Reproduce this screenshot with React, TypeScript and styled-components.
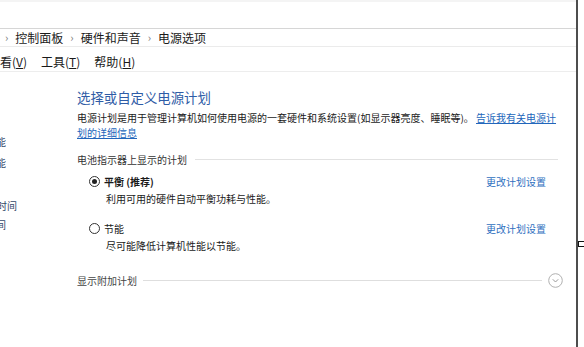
import styled, { createGlobalStyle } from 'styled-components';

const GlobalStyle = createGlobalStyle`
  html, body {
    margin: 0;
    padding: 0;
    background: #fff;
  }
  body {
    font-family: "Noto Sans CJK SC", "Noto Sans", sans-serif;
    color: #1a1a1a;
  }
`;

const Screen = styled.div`
  position: relative;
  display: flex;
  width: 584px;
  height: 347px;
  overflow: hidden;
  background: #fff;
`;

const Window = styled.div`
  width: 576px;
  display: flex;
  flex-direction: column;
  overflow: hidden;
`;

const Edge = styled.div`
  width: 2px;
  background: #4d4d4d;
`;

const Outside = styled.div`
  position: relative;
  flex: 1;
`;

// stray bit of something off-window
const Marker = styled.div`
  position: absolute;
  left: 0;
  top: 241px;
  width: 6px;
  height: 4px;
  border: 1px solid #111;
  border-right: none;
`;

const TitleStrip = styled.div`
  box-sizing: border-box;
  height: 29px;
  border-top: 2px solid #f4f4f4;
  border-bottom: 1px solid #d6d6d6;
`;

const AddressBar = styled.div`
  box-sizing: border-box;
  height: 18px;
  display: flex;
  align-items: center;
  gap: 5px;
  padding-left: 3px;
  border-bottom: 1px solid #ebebeb;
  font-size: 12px;
  line-height: 17px;
  white-space: nowrap;
`;

const Crumb = styled.span`
  color: #1a1a1a;
`;

const Sep = styled.span`
  color: #777;
  font-size: 11px;
  padding: 0 2px;
`;

const MenuBar = styled.div`
  box-sizing: border-box;
  height: 25px;
  display: flex;
  align-items: center;
  gap: 14px;
  padding-top: 5px;
  border-bottom: 1px solid #ededed;
  font-size: 12px;
  line-height: 18px;
  white-space: nowrap;
`;

const MenuItem = styled.span<{ $cut?: number }>`
  color: #1a1a1a;
  margin-left: ${(p) => (p.$cut ? -p.$cut : 0)}px;
  u {
    text-decoration: underline;
    text-underline-offset: 1px;
  }
`;

const Body = styled.div`
  flex: 1;
  display: flex;
`;

const Sidebar = styled.div`
  width: 77px;
  display: flex;
  flex-direction: column;
  padding-top: 62px;
`;

const SideLink = styled.div<{ $show: number; $top?: number }>`
  width: ${(p) => p.$show}px;
  margin-top: ${(p) => p.$top || 0}px;
  display: flex;
  justify-content: flex-end;
  overflow: hidden;
  white-space: nowrap;
  font-size: 10px;
  line-height: 15px;
  color: #34496b;
`;

const Main = styled.div`
  width: 486px;
  display: flex;
  flex-direction: column;
  padding-top: 16px;
`;

const Title = styled.h1`
  margin: 0;
  font-size: 13.4px;
  line-height: 18px;
  font-weight: 400;
  color: #2f5ca6;
`;

const Intro = styled.p`
  margin: 4px 0 0;
  max-width: 484px;
  font-size: 10px;
  line-height: 15px;
  color: #1a1a1a;
`;

const Link = styled.a`
  color: #2266bb;
  text-decoration: underline;
  text-underline-offset: 1px;
  cursor: pointer;
`;

const GroupHeader = styled.div`
  margin-top: 12px;
  display: flex;
  align-items: center;
  gap: 8px;
  padding-right: 5px;
  font-size: 10px;
  line-height: 15px;
  color: #333;
  &::after {
    content: '';
    flex: 1;
    height: 1px;
    background: #e2e2e2;
  }
`;

const Plan = styled.div<{ $top: number }>`
  margin-top: ${(p) => p.$top}px;
  display: flex;
  flex-direction: column;
  gap: 2px;
`;

const PlanRow = styled.label`
  display: flex;
  align-items: center;
  padding-left: 12px;
  padding-right: 17px;
  font-size: 10px;
  line-height: 15px;
`;

const Radio = styled.span<{ $checked?: boolean }>`
  box-sizing: border-box;
  width: 11px;
  height: 11px;
  border-radius: 50%;
  border: 1px solid #333;
  display: flex;
  align-items: center;
  justify-content: center;
  &::after {
    content: '';
    width: 5px;
    height: 5px;
    border-radius: 50%;
    background: ${(p) => (p.$checked ? '#222' : 'transparent')};
  }
`;

const PlanName = styled.span<{ $bold?: boolean }>`
  margin-left: 4px;
  flex: 1;
  font-weight: ${(p) => (p.$bold ? 700 : 400)};
  color: #1a1a1a;
`;

const ChangeLink = styled.a`
  color: #2f6fc0;
  text-decoration: none;
  cursor: pointer;
`;

const PlanDesc = styled.div`
  padding-left: 29px;
  font-size: 10px;
  line-height: 15px;
  color: #1a1a1a;
`;

const More = styled.div`
  margin-top: 20px;
  display: flex;
  align-items: center;
  gap: 6px;
  font-size: 10px;
  line-height: 15px;
  color: #444;
`;

const MoreLine = styled.div`
  flex: 1;
  height: 1px;
  background: #dedede;
`;

const ExpandButton = styled.button`
  width: 15px;
  height: 15px;
  padding: 0;
  border: none;
  background: none;
  display: flex;
  align-items: center;
  justify-content: center;
  cursor: pointer;
`;

const ExpandIcon = () => (
  <svg width="15" height="15" viewBox="0 0 15 15">
    <circle cx="7.5" cy="7.5" r="6.8" fill="none" stroke="#b0b0b0" strokeWidth="1" />
    <path d="M4.8 6.3 L7.5 9 L10.2 6.3" fill="none" stroke="#9a9a9a" strokeWidth="1" />
  </svg>
);

export default function App() {
  return (
    <>
      <GlobalStyle />
      <Screen>
        <Window>
          <TitleStrip />
          <AddressBar>
            <Sep>›</Sep>
            <Crumb>控制面板</Crumb>
            <Sep>›</Sep>
            <Crumb>硬件和声音</Crumb>
            <Sep>›</Sep>
            <Crumb>电源选项</Crumb>
          </AddressBar>
          <MenuBar>
            <MenuItem $cut={12}>
              查看(<u>V</u>)
            </MenuItem>
            <MenuItem>
              工具(<u>T</u>)
            </MenuItem>
            <MenuItem>
              帮助(<u>H</u>)
            </MenuItem>
          </MenuBar>
          <Body>
            <Sidebar>
              <SideLink $show={6}>选择电源按钮的功能</SideLink>
              <SideLink $show={6} $top={6}>
                选择关闭盖子的功能
              </SideLink>
              <SideLink $show={17} $top={28}>
                选择关闭显示器的时间
              </SideLink>
              <SideLink $show={6} $top={4}>
                更改计算机睡眠时间
              </SideLink>
            </Sidebar>
            <Main>
              <Title>选择或自定义电源计划</Title>
              <Intro>
                电源计划是用于管理计算机如何使用电源的一套硬件和系统设置(如显示器亮度、睡眠等)。{' '}
                <Link>告诉我有关电源计划的详细信息</Link>
              </Intro>
              <GroupHeader>电池指示器上显示的计划</GroupHeader>
              <Plan $top={7}>
                <PlanRow>
                  <Radio $checked />
                  <PlanName $bold>平衡 (推荐)</PlanName>
                  <ChangeLink>更改计划设置</ChangeLink>
                </PlanRow>
                <PlanDesc>利用可用的硬件自动平衡功耗与性能。</PlanDesc>
              </Plan>
              <Plan $top={15}>
                <PlanRow>
                  <Radio />
                  <PlanName>节能</PlanName>
                  <ChangeLink>更改计划设置</ChangeLink>
                </PlanRow>
                <PlanDesc>尽可能降低计算机性能以节能。</PlanDesc>
              </Plan>
              <More>
                <span>显示附加计划</span>
                <MoreLine />
                <ExpandButton aria-label="显示附加计划">
                  <ExpandIcon />
                </ExpandButton>
              </More>
            </Main>
          </Body>
        </Window>
        <Edge />
        <Outside>
          <Marker />
        </Outside>
      </Screen>
    </>
  );
}
